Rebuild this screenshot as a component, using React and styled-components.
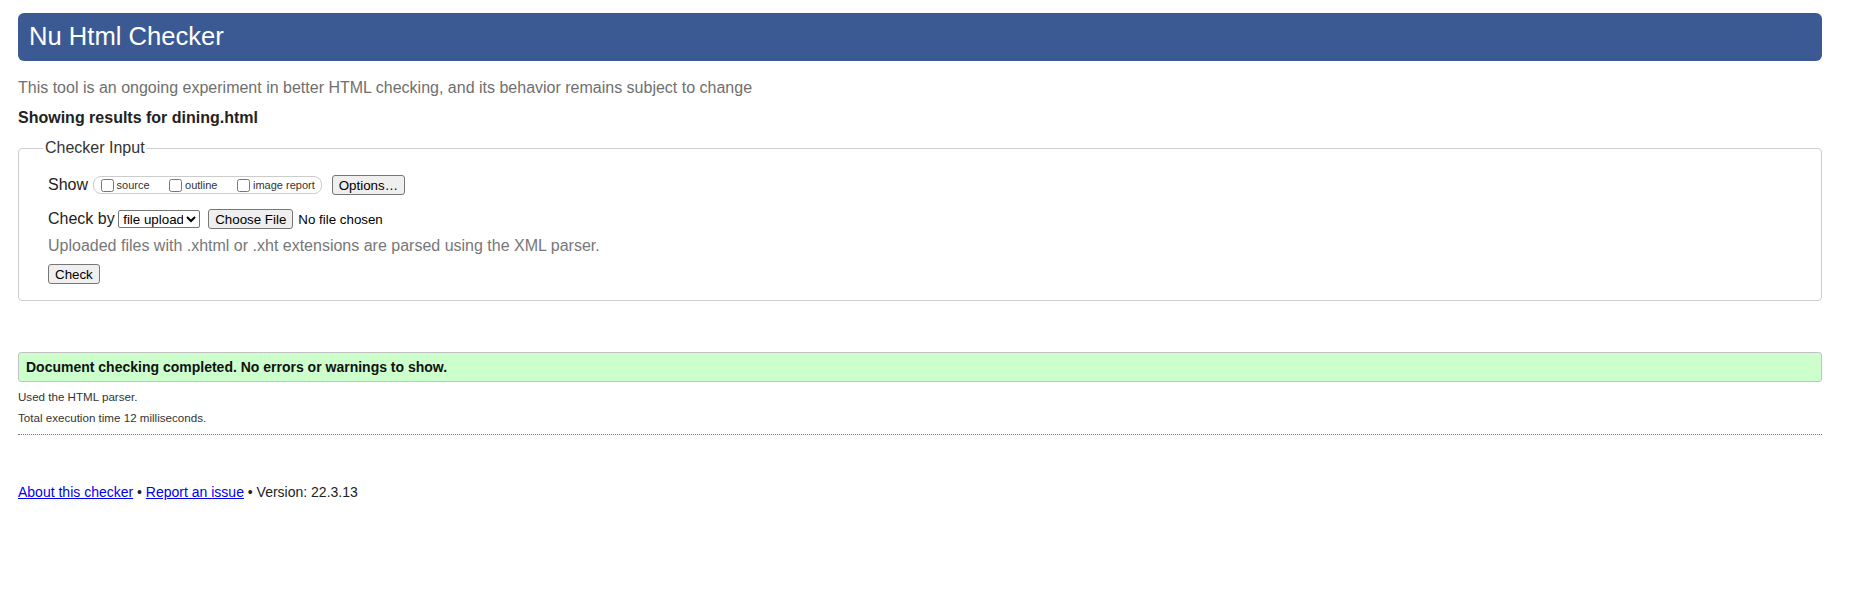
import React from "react";
import styled, { createGlobalStyle } from "styled-components";

const GlobalStyle = createGlobalStyle`
  html, body {
    margin: 0;
    padding: 0;
    background: #fff;
  }
  body {
    font-family: "Liberation Sans", Arial, sans-serif;
    color: #222;
  }
`;

function App() {
  return (
    <Page>
      <GlobalStyle />
      <Title>Nu Html Checker</Title>
      <Intro>
        This tool is an ongoing experiment in better HTML checking, and its
        behavior remains subject to change
      </Intro>
      <ResultsFor>Showing results for dining.html</ResultsFor>

      <InputBox>
        <Legend>Checker Input</Legend>
        <Row>
          <RowLabel>Show</RowLabel>
          <ShowGroup>
            <CheckItem>
              <Checkbox type="checkbox" />
              <SmallLabel>source</SmallLabel>
            </CheckItem>
            <CheckItem>
              <Checkbox type="checkbox" />
              <SmallLabel>outline</SmallLabel>
            </CheckItem>
            <CheckItem last>
              <Checkbox type="checkbox" />
              <SmallLabel>image report</SmallLabel>
            </CheckItem>
          </ShowGroup>
          <Button type="button" style={{ marginLeft: 10 }}>
            Options…
          </Button>
        </Row>
        <Row gap="14px">
          <RowLabel>Check by</RowLabel>
          <Select defaultValue="upload">
            <option value="address">address</option>
            <option value="upload">file upload</option>
            <option value="text">text input</option>
          </Select>
          <FileInput type="file" />
        </Row>
        <Hint>
          Uploaded files with .xhtml or .xht extensions are parsed using the
          XML parser.
        </Hint>
        <SubmitRow>
          <Button type="button">Check</Button>
        </SubmitRow>
      </InputBox>

      <Success>Document checking completed. No errors or warnings to show.</Success>
      <Details>Used the HTML parser.</Details>
      <Details>Total execution time 12 milliseconds.</Details>
      <Separator />

      <Footer>
        <Link href="#about">About this checker</Link> •{" "}
        <Link href="#issue">Report an issue</Link> • Version: 22.3.13
      </Footer>
    </Page>
  );
}

export default App;

const Page = styled.div`
  padding: 13px 38px 40px 18px;
`;

const Title = styled.h1`
  margin: 0;
  height: 48px;
  padding: 0 11px;
  box-sizing: border-box;
  background: #3b5a94;
  border-radius: 6px;
  color: #fff;
  font-size: 25.6px;
  font-weight: normal;
  line-height: 46px;
`;

const Intro = styled.p`
  margin: 18px 0 0;
  font-size: 16px;
  line-height: 18px;
  color: #6f6f6f;
`;

const ResultsFor = styled.p`
  margin: 12px 0 0;
  font-size: 16px;
  line-height: 18px;
  font-weight: bold;
  color: #222;
`;

// formulário
const InputBox = styled.fieldset`
  margin: 12px 0 0;
  padding: 18px 0 16px 29px;
  border: 1px solid #cfcfcf;
  border-radius: 4px;
  min-width: 0;
`;

const Legend = styled.legend`
  margin-left: -5px;
  padding: 0 1px 0 2px;
  font-size: 16px;
  line-height: 18px;
  color: #333;
`;

const Row = styled.div`
  display: flex;
  align-items: center;
  height: 20px;
  margin-top: ${(p) => p.gap || "0"};
`;

const RowLabel = styled.span`
  font-size: 16px;
  line-height: 18px;
  color: #222;
  margin-right: 3.5px;
`;

const ShowGroup = styled.span`
  display: inline-flex;
  align-items: center;
  height: 18px;
  margin-left: 1px;
  padding: 0 6px 0 3px;
  border: 1px solid #ccc;
  border-radius: 8px;
  box-sizing: border-box;
`;

const CheckItem = styled.label`
  display: inline-flex;
  align-items: center;
  margin-right: ${(p) => (p.last ? "0" : "15.5px")};
`;

const Checkbox = styled.input`
  width: 13px;
  height: 13px;
  margin: 0 3px 0 4px;
`;

const SmallLabel = styled.span`
  font-size: 11px;
  line-height: 13px;
  padding-top: 1px;
  color: #333;
`;

const Button = styled.button`
  height: 20px;
  padding: 0 6px;
  font-family: "Liberation Sans", Arial, sans-serif;
  font-size: 13.333px;
  color: #000;
  background: #efefef;
  border: 1px solid #767676;
  border-radius: 3px;
`;

const Select = styled.select`
  width: 82px;
  height: 18px;
  font-family: "Liberation Sans", Arial, sans-serif;
  font-size: 13.333px;
  color: #000;
  background: #fff;
  border: 1px solid #767676;
  border-radius: 2px;
`;

const FileInput = styled.input`
  margin-left: 8px;
  font-family: "Liberation Sans", Arial, sans-serif;
  font-size: 13.333px;
  color: #000;

  &::file-selector-button {
    height: 20px;
    padding: 0 6px;
    margin-right: 5px;
    font-family: "Liberation Sans", Arial, sans-serif;
    font-size: 13.333px;
    background: #efefef;
    border: 1px solid #767676;
    border-radius: 3px;
  }
`;

const Hint = styled.p`
  margin: 8px 0 0;
  font-size: 16px;
  line-height: 18px;
  color: #777;
`;

const SubmitRow = styled.div`
  margin-top: 9px;
  display: flex;
`;

// resultados
const Success = styled.p`
  margin: 51px 0 0;
  padding: 6px 7px;
  font-size: 14px;
  line-height: 16px;
  font-weight: bold;
  color: #111;
  background: #ccffcc;
  border: 1px solid #c2c2c2;
  border-radius: 3px;
`;

const Details = styled.p`
  margin: 8px 0 0;
  font-size: 11.6px;
  line-height: 13px;
  color: #333;
`;

const Separator = styled.div`
  margin-top: 10px;
  border-top: 1px dotted #777;
`;

const Footer = styled.p`
  margin: 49px 0 0;
  font-size: 14px;
  line-height: 16px;
  color: #222;
`;

const Link = styled.a`
  color: #0000ee;
  text-decoration: underline;
`;
